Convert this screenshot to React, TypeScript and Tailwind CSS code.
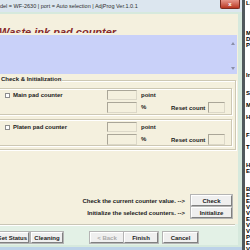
import React from "react";

const SIDE_LINES = [
  "La", "", "", "", "", "M", "D", "P", "", "", "", "", "In", "", "", "S", "", "M", "", "H", "", "", "F", "", "T",
  "", "", "H", "E", "", "", "B", "E", "E", "V", "V", "E", "V", "V", "P", "E", "V",
];

function WinButton({ label, className, disabled }: { label: string; className: string; disabled?: boolean }) {
  return (
    <div
      className={`h-[11px] shrink-0 flex items-center justify-center bg-[#efefef] border border-t-white border-l-white border-r-[#808080] border-b-[#808080] shadow-[0_0_0_1px_#b4b4b4] text-[6px] font-bold leading-none whitespace-nowrap ${
        disabled ? "text-[#a9a9a9]" : "text-[#1c1c1c]"
      } ${className}`}
    >
      {label}
    </div>
  );
}

function Field({ className }: { className: string }) {
  return <div className={`shrink-0 bg-[#f4f0de] border border-[#aaa698] border-r-[#dcd8c8] border-b-[#dcd8c8] ${className}`} />;
}

function CounterBox({ label, className }: { label: string; className: string }) {
  return (
    <div
      className={`w-[235px] h-[27px] shrink-0 flex items-start border border-[#cdc8b4] shadow-[inset_1px_1px_0_#ffffff,1px_1px_0_#ffffff] text-[6px] font-bold text-[#222] ${className}`}
    >
      <div className="w-[109px] h-[10px] flex items-center shrink-0">
        <div className="ml-[7px] w-[5px] h-[5px] bg-white border border-[#8d8d8d]" />
        <span className="ml-[3px] leading-none whitespace-nowrap">{label}</span>
      </div>
      <div className="flex flex-col gap-[2px]">
        <Field className="w-[30px] h-[10px]" />
        <Field className="w-[30px] h-[11px]" />
      </div>
      <div className="ml-[4px] w-[30px] flex flex-col gap-[2px] shrink-0">
        <span className="h-[10px] leading-[10px]">point</span>
        <span className="h-[11px] leading-[11px]">%</span>
      </div>
      <div className="w-[54px] flex flex-col gap-[2px] shrink-0">
        <div className="h-[10px]" />
        <div className="h-[11px] flex items-center">
          <span className="leading-none whitespace-nowrap">Reset count</span>
          <Field className="ml-auto w-[17px] h-[11px]" />
        </div>
      </div>
    </div>
  );
}

export default function App() {
  return (
    <div className="w-[250px] h-[250px] overflow-hidden flex bg-white font-['Liberation_Sans',Arial,sans-serif]">
      {/* main dialog window */}
      <div className="w-[242px] h-[250px] shrink-0 flex flex-col bg-[#bcd2e8]">
        <div className="h-[247px] shrink-0 flex flex-col bg-[#d6e9dd]">
          {/* title bar */}
          <div className="h-[12px] shrink-0 flex items-start bg-[#dce6ef]">
            <span className="mt-[3px] text-[5.5px] leading-[6px] text-[#2e2e2e] whitespace-nowrap">
              del = WF-2630 | port = Auto selection | AdjProg Ver.1.0.1
            </span>
            <div className="ml-auto mr-[2px] w-[20px] h-[9px] rounded-b-[2px] bg-gradient-to-b from-[#e6958a] to-[#b93520] border border-t-0 border-[#7d2b20] flex items-center justify-center text-white text-[6px] font-bold leading-none">
              x
            </div>
          </div>
          <div className="h-[2px] shrink-0" />
          {/* client area */}
          <div className="w-[238px] flex flex-col">
            {/* header */}
            <div className="h-[19px] bg-[#f4f0de] pt-[5px]">
              <span className="ml-[-1px] text-[11px] leading-[11px] font-bold italic underline text-[#86292b] whitespace-nowrap">
                Waste ink pad counter
              </span>
            </div>
            <div className="h-[2px] bg-[#f4f0de]" />
            {/* info text box */}
            <div className="h-[39px] flex bg-[#f4f0de]">
              <div className="w-[237px] h-[39px] bg-[#c9d1f9] flex justify-end">
                <div className="w-[9px] h-[39px] flex flex-col items-center justify-between pt-[7px] pb-[4px]">
                  <svg width="4" height="3" viewBox="0 0 4 3">
                    <path d="M2 0 L4 3 L0 3 Z" fill="#8a8fa8" />
                  </svg>
                  <svg width="4" height="3" viewBox="0 0 4 3">
                    <path d="M0 0 L4 0 L2 3 Z" fill="#8a8fa8" />
                  </svg>
                </div>
              </div>
            </div>
            {/* body */}
            <div className="h-[150px] bg-[#f4f0de] flex flex-col">
              <div className="relative mt-[6px] ml-[-4px] w-[240px] h-[70px] shrink-0 flex flex-col border border-[#cdc8b4] shadow-[inset_1px_1px_0_#ffffff,1px_1px_0_#ffffff]">
                <span className="absolute left-[3px] top-[-5px] px-[1px] bg-[#f4f0de] text-[6px] leading-[7px] font-bold text-[#222] whitespace-nowrap">
                  Check &amp; Initialization
                </span>
                <CounterBox label="Main pad counter" className="mt-[7px] pt-[1px]" />
                <CounterBox label="Platen pad counter" className="mt-[4px] pt-[2px]" />
              </div>
              <div className="mt-[45px] h-[11px] flex items-center justify-end pr-[6px]">
                <span className="mr-[6px] text-[6px] font-bold leading-none text-[#222] whitespace-nowrap">
                  Check the current counter value. {"-->"}
                </span>
                <WinButton label="Check" className="w-[41px]" />
              </div>
              <div className="mt-[1px] h-[11px] flex items-center justify-end pr-[6px]">
                <span className="mr-[6px] text-[6px] font-bold leading-none text-[#222] whitespace-nowrap">
                  Initialize the selected counters. {"-->"}
                </span>
                <WinButton label="Initialize" className="w-[41px]" />
              </div>
            </div>
            {/* separator */}
            <div className="h-[2px] bg-[#e3f1e6] flex flex-col">
              <div className="w-[235px] h-[1px] bg-[#c9c6b6]" />
              <div className="w-[235px] h-[1px] bg-white" />
            </div>
            {/* button row */}
            <div className="h-[19px] bg-[#e3f1e6] flex items-start pt-[6px]">
              <WinButton label="Get Status" className="ml-[-5px] w-[34px]" />
              <WinButton label="Cleaning" className="ml-[2px] w-[32px]" />
              <WinButton label="< Back" disabled className="ml-[27px] w-[34px]" />
              <WinButton label="Finish" className="w-[34px]" />
              <WinButton label="Cancel" className="ml-[5px] w-[35px]" />
            </div>
          </div>
        </div>
      </div>
      {/* window edge */}
      <div className="w-[3px] h-[250px] shrink-0 bg-[#4f585c]" />
      {/* background window */}
      <div className="w-[5px] h-[250px] shrink-0 overflow-hidden bg-white pl-[1px] text-[6px] font-bold text-black">
        {SIDE_LINES.map((l, i) => (
          <div key={i} className="h-[6px] leading-[6px] whitespace-nowrap">
            {l}
          </div>
        ))}
      </div>
    </div>
  );
}
